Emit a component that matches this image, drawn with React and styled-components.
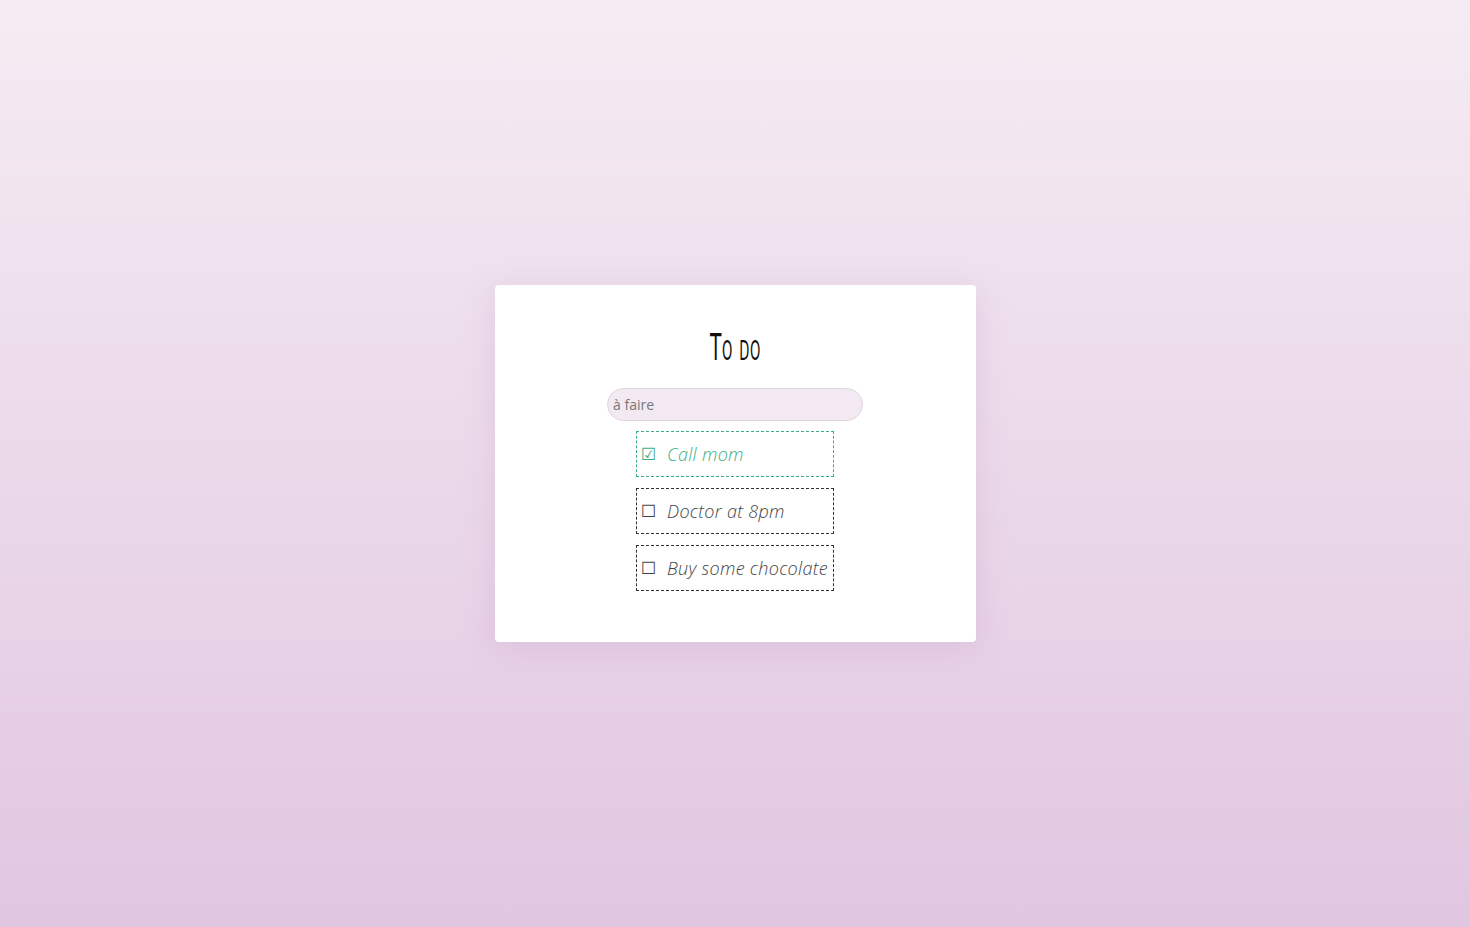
import React, { useState } from "react";
import styled, { createGlobalStyle } from "styled-components";

const GlobalStyle = createGlobalStyle`
    html, body {
        margin: 0;
        padding: 0;
    }
    body {
        min-height: 100vh;
        background: linear-gradient(180deg, #f5ecf3 0%, #e1c6e1 100%);
        font-family: "Open Sans", "Liberation Sans", sans-serif;
    }
`;

const Page = styled.div`
    height: 100vh;
    display: flex;
    align-items: center;
    justify-content: center;
`;

const Card = styled.div`
    width: 481px;
    height: 357px;
    box-sizing: border-box;
    background: #fff;
    border-radius: 4px;
    box-shadow: 0 6px 30px rgba(200, 160, 200, 0.35);
    display: flex;
    flex-direction: column;
    align-items: center;
    padding-top: 41px;
`;

const Title = styled.h1`
    margin: 0 0 18px;
    font-family: "DejaVu Sans Condensed", "DejaVu Sans", sans-serif;
    font-weight: 300;
    font-size: 37px;
    line-height: 44px;
    font-variant: small-caps;
    letter-spacing: 1px;
    color: #111;
    transform: scaleX(0.56);
`;

const Field = styled.input`
    width: 256px;
    height: 33px;
    box-sizing: border-box;
    border: 1px solid #ded6dd;
    border-radius: 17px;
    background: #f3e9f2;
    padding: 0 5px;
    font-family: "Open Sans", sans-serif;
    font-size: 14px;
    color: #555;
    outline: none;
    &::placeholder {
        color: #777;
    }
`;

const List = styled.ul`
    list-style: none;
    margin: 10px 0 0;
    padding: 0;
    display: flex;
    flex-direction: column;
    gap: 11px;
`;

const Item = styled.li`
    width: 198px;
    height: 46px;
    box-sizing: border-box;
    border: 1px dashed ${p => (p.done ? "#3eae84" : "#333")};
    color: ${p => (p.done ? "#3eae84" : "#3f4545")};
    display: flex;
    align-items: center;
    padding-left: 4px;
    padding-bottom: 1px;
    cursor: pointer;
    white-space: nowrap;
`;

const Box = styled.span`
    font-family: "DejaVu Sans", sans-serif;
    font-size: 17px;
    width: 26px;
`;

const Label = styled.span`
    font-family: "Open Sans", sans-serif;
    font-style: italic;
    font-weight: 300;
    font-size: 18px;
    letter-spacing: 0.3px;
`;

const App = () => {
    const [todos, setTodos] = useState([
        { text: "Call mom", done: true },
        { text: "Doctor at 8pm", done: false },
        { text: "Buy some chocolate", done: false },
    ]);

    const toggle = i =>
        setTodos(todos.map((t, j) => (j === i ? { ...t, done: !t.done } : t)));

    return (
        <>
            <GlobalStyle />
            <Page>
                <Card>
                    <Title>To do</Title>
                    <Field placeholder="à faire" />
                    <List>
                        {todos.map((t, i) => (
                            <Item key={t.text} done={t.done} onClick={() => toggle(i)}>
                                <Box>{t.done ? "☑" : "☐"}</Box>
                                <Label>{t.text}</Label>
                            </Item>
                        ))}
                    </List>
                </Card>
            </Page>
        </>
    );
};

export default App;
